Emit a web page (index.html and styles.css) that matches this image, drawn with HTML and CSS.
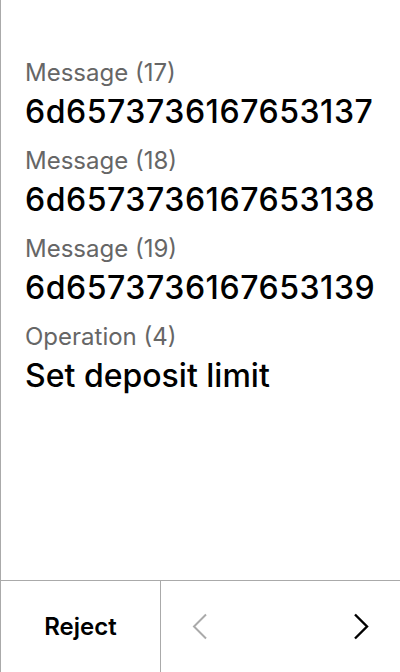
FILE: index.html
```html
<!DOCTYPE html>
<html>
<head>
<meta charset="utf-8">
<link rel="stylesheet" href="styles.css">
</head>
<body>
<div class="screen">
  <div class="content">
    <div class="item">
      <div class="label">Message (17)</div>
      <div class="value hex">6d6573736167653137</div>
    </div>
    <div class="item">
      <div class="label">Message (18)</div>
      <div class="value hex">6d6573736167653138</div>
    </div>
    <div class="item">
      <div class="label">Message (19)</div>
      <div class="value hex">6d6573736167653139</div>
    </div>
    <div class="item">
      <div class="label">Operation (4)</div>
      <div class="value">Set deposit limit</div>
    </div>
  </div>
  <div class="footer">
    <div class="reject">Reject</div>
    <div class="nav">
      <svg class="chev" width="16" height="27" viewBox="0 0 16 27"><path d="M14 1.5 L2 13.5 L14 25.5" fill="none" stroke="#aaaaaa" stroke-width="2"/></svg>
      <svg class="chev" width="16" height="27" viewBox="0 0 16 27"><path d="M2 1.5 L14 13.5 L2 25.5" fill="none" stroke="#000000" stroke-width="2.4"/></svg>
    </div>
  </div>
</div>
</body>
</html>
```
FILE: styles.css
```css
html, body {
  margin: 0;
  padding: 0;
  background: #ffffff;
}
body {
  font-family: Inter, "Noto Sans", sans-serif;
  color: #000;
}
.screen {
  width: 400px;
  height: 672px;
  box-sizing: border-box;
  border-left: 1px solid #aaaaaa;
  display: flex;
  flex-direction: column;
}
.content {
  flex: 1;
  padding: 57px 0 0 24px;
  display: flex;
  flex-direction: column;
  gap: 13px;
}
.label {
  font-size: 24px;
  line-height: 32px;
  color: #666666;
}
.value {
  font-size: 32px;
  line-height: 40px;
  margin-top: 3px;
  font-weight: 500;
}
.hex {
  letter-spacing: 0.55px;
}
.footer {
  height: 92px;
  border-top: 1px solid #aaaaaa;
  display: flex;
  box-sizing: border-box;
}
.reject {
  width: 159px;
  border-right: 1px solid #aaaaaa;
  display: flex;
  align-items: center;
  justify-content: center;
  font-size: 24px;
  font-weight: 600;
}
.nav {
  flex: 1;
  display: flex;
  align-items: center;
  justify-content: space-between;
  padding: 0 31px 0 31px;
}
.chev {
  display: block;
}
```
